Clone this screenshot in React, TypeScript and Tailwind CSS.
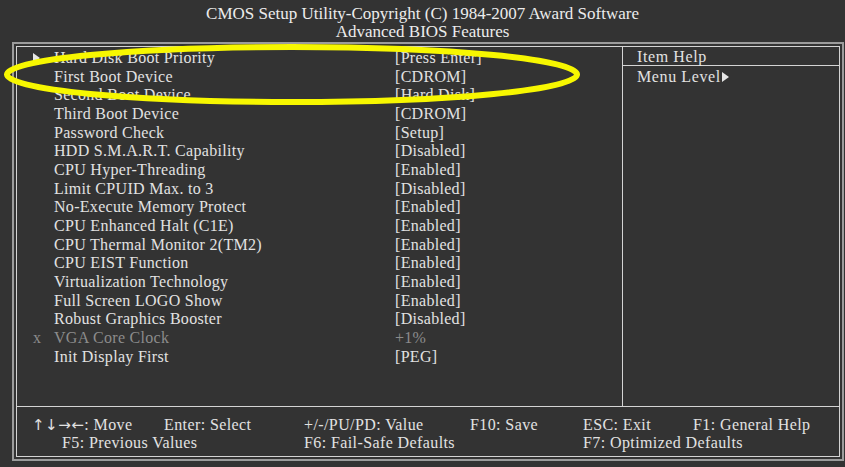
import React from 'react';

type Row = { label: string; value: string; sub?: boolean; disabled?: boolean };

const rows: Row[] = [
  { label: 'Hard Disk Boot Priority', value: '[Press Enter]', sub: true },
  { label: 'First Boot Device', value: '[CDROM]' },
  { label: 'Second Boot Device', value: '[Hard Disk]' },
  { label: 'Third Boot Device', value: '[CDROM]' },
  { label: 'Password Check', value: '[Setup]' },
  { label: 'HDD S.M.A.R.T. Capability', value: '[Disabled]' },
  { label: 'CPU Hyper-Threading', value: '[Enabled]' },
  { label: 'Limit CPUID Max. to 3', value: '[Disabled]' },
  { label: 'No-Execute Memory Protect', value: '[Enabled]' },
  { label: 'CPU Enhanced Halt (C1E)', value: '[Enabled]' },
  { label: 'CPU Thermal Monitor 2(TM2)', value: '[Enabled]' },
  { label: 'CPU EIST Function', value: '[Enabled]' },
  { label: 'Virtualization Technology', value: '[Enabled]' },
  { label: 'Full Screen LOGO Show', value: '[Enabled]' },
  { label: 'Robust Graphics Booster', value: '[Disabled]' },
  { label: 'VGA Core Clock', value: '+1%', disabled: true },
  { label: 'Init Display First', value: '[PEG]' },
];

const Triangle = () => (
  <svg width="7" height="10" viewBox="0 0 7 10" className="inline-block">
    <path d="M0 0 L7 5 L0 10 Z" fill="#e6e6e6" />
  </svg>
);

export default function App() {
  return (
    <div className="relative w-[845px] h-[467px] overflow-hidden bg-[#333333] text-[#e2e2e2] font-['Liberation_Serif',serif] text-[16px] tracking-[0.3px]">
      {/* title */}
      <div className="h-[42px] flex flex-col items-center pt-[5px] leading-[17.5px] text-[17px] text-[#ececec] tracking-normal">
        <div>CMOS Setup Utility-Copyright (C) 1984-2007 Award Software</div>
        <div>Advanced BIOS Features</div>
      </div>

      <div className="ml-[12px] w-[832px] h-[419px] border-2 border-[#9c9c9c] p-[2px]">
        <div className="h-full border border-[#d4d4d4] flex flex-col">
          <div className="flex h-[360px] border-b border-[#d4d4d4]">
            {/* item list */}
            <div className="w-[606px] border-r border-[#d4d4d4] pt-[1.5px]">
              {rows.map((r) => (
                <div key={r.label} className="flex items-center h-[18.7px] leading-[18px]">
                  <div className="w-[37px] pl-[16px] flex items-center">
                    {r.sub && <Triangle />}
                    {r.disabled && <span className="text-[#8c8c8c]">x</span>}
                  </div>
                  <div className={`w-[341px] ${r.disabled ? 'text-[#8c8c8c]' : ''}`}>{r.label}</div>
                  <div className={r.disabled ? 'text-[#8c8c8c]' : ''}>{r.value}</div>
                </div>
              ))}
            </div>

            {/* help panel */}
            <div className="flex-1 flex flex-col">
              <div className="h-[19px] border-b border-[#d4d4d4] pl-[14px] pt-[1px] leading-[18px] tracking-[0.6px]">Item Help</div>
              <div className="h-[20px] pl-[14px] pt-[1px] leading-[19px] flex items-center tracking-[0.6px]">
                Menu Level
                <span className="ml-[1px] flex items-center"><Triangle /></span>
              </div>
            </div>
          </div>

          {/* key legend */}
          <div className="flex-1 pt-[9px] leading-[18px] tracking-[0.4px]">
            <div className="flex h-[18px] pl-[15px]">
              <span className="w-[132px] flex items-center">
                <span className="font-['DejaVu_Sans',sans-serif] text-[15px] tracking-[0.5px]">↑↓→←</span>
                <span>: Move</span>
              </span>
              <span className="w-[140px]">Enter: Select</span>
              <span className="w-[166px]">+/-/PU/PD: Value</span>
              <span className="w-[113px]">F10: Save</span>
              <span className="w-[110px]">ESC: Exit</span>
              <span>F1: General Help</span>
            </div>
            <div className="flex h-[18px] pl-[45px]">
              <span className="w-[242px]">F5: Previous Values</span>
              <span className="w-[279px]">F6: Fail-Safe Defaults</span>
              <span>F7: Optimized Defaults</span>
            </div>
          </div>
        </div>
      </div>

      {/* highlight ring drawn over the screenshot */}
      <svg className="absolute left-0 top-0 pointer-events-none" width="845" height="467" viewBox="0 0 845 467">
        <ellipse cx="292" cy="74.5" rx="285" ry="27.5" fill="none" stroke="#f7f700" strokeWidth="6" />
      </svg>
    </div>
  );
}
